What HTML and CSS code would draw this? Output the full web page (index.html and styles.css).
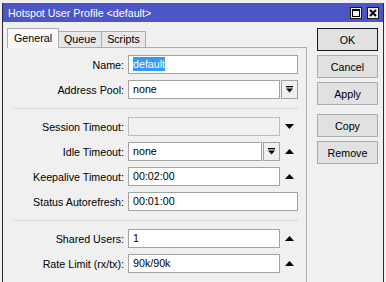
FILE: index.html
```html
<!DOCTYPE html>
<html lang="en">
<head>
    <meta charset="UTF-8">
    <title>Hotspot User Profile &lt;default&gt;</title>
    <link rel="stylesheet" href="styles.css">
</head>
<body>
    <div class="window">
        <div class="titlebar">
            <span class="title">Hotspot User Profile &lt;default&gt;</span>
            <div class="tb-btns">
                <span class="tb-btn">
                    <svg width="10" height="10" viewBox="0 0 10 10"><rect x="1.5" y="1.5" width="7" height="7" fill="none" stroke="#000"/><rect x="1" y="1" width="8" height="2" fill="#000"/></svg>
                </span>
                <span class="tb-btn">
                    <svg width="10" height="10" viewBox="0 0 10 10"><path d="M2 2 L8 8 M8 2 L2 8" stroke="#000" stroke-width="2"/></svg>
                </span>
            </div>
        </div>

        <div class="content">
            <div class="tabs-area">
                <div class="tabs">
                    <span class="tab active">General</span>
                    <span class="tab">Queue</span>
                    <span class="tab">Scripts</span>
                </div>
                <div class="panel">
                    <div class="row">
                        <label>Name:</label>
                        <div class="field"><span class="input full"><span class="sel">default</span></span></div>
                    </div>
                    <div class="row">
                        <label>Address Pool:</label>
                        <div class="field">
                            <span class="input">none</span>
                            <span class="dd"><svg width="7" height="7" viewBox="0 0 7 7"><rect x="0" y="0" width="7" height="1.3" fill="#000"/><path d="M0 2.5 H7 L3.5 6.5 Z" fill="#000"/></svg></span>
                        </div>
                    </div>
                    <div class="sep"></div>
                    <div class="row">
                        <label>Session Timeout:</label>
                        <div class="field">
                            <span class="input disabled"></span>
                            <span class="arrow"><svg width="9" height="5" viewBox="0 0 9 5"><path d="M0 0 H9 L4.5 5 Z" fill="#000"/></svg></span>
                        </div>
                    </div>
                    <div class="row">
                        <label>Idle Timeout:</label>
                        <div class="field">
                            <span class="input">none</span>
                            <span class="dd"><svg width="7" height="7" viewBox="0 0 7 7"><rect x="0" y="0" width="7" height="1.3" fill="#000"/><path d="M0 2.5 H7 L3.5 6.5 Z" fill="#000"/></svg></span>
                            <span class="arrow"><svg width="9" height="5" viewBox="0 0 9 5"><path d="M0 5 H9 L4.5 0 Z" fill="#000"/></svg></span>
                        </div>
                    </div>
                    <div class="row">
                        <label>Keepalive Timeout:</label>
                        <div class="field">
                            <span class="input">00:02:00</span>
                            <span class="arrow"><svg width="9" height="5" viewBox="0 0 9 5"><path d="M0 5 H9 L4.5 0 Z" fill="#000"/></svg></span>
                        </div>
                    </div>
                    <div class="row">
                        <label>Status Autorefresh:</label>
                        <div class="field"><span class="input full">00:01:00</span></div>
                    </div>
                    <div class="sep"></div>
                    <div class="row">
                        <label>Shared Users:</label>
                        <div class="field">
                            <span class="input">1</span>
                            <span class="arrow"><svg width="9" height="5" viewBox="0 0 9 5"><path d="M0 5 H9 L4.5 0 Z" fill="#000"/></svg></span>
                        </div>
                    </div>
                    <div class="row">
                        <label>Rate Limit (rx/tx):</label>
                        <div class="field">
                            <span class="input">90k/90k</span>
                            <span class="arrow"><svg width="9" height="5" viewBox="0 0 9 5"><path d="M0 5 H9 L4.5 0 Z" fill="#000"/></svg></span>
                        </div>
                    </div>
                </div>
            </div>

            <div class="side">
                <button class="btn btn-default">OK</button>
                <button class="btn">Cancel</button>
                <button class="btn">Apply</button>
                <button class="btn gap-top">Copy</button>
                <button class="btn">Remove</button>
            </div>
        </div>
    </div>
</body>
</html>
```

FILE: styles.css
```css
body {
    margin: 0;
    background-color: #f0f0f0;
    font-family: "Liberation Sans", Arial, sans-serif;
    font-size: 10.7px;
    color: #000;
    overflow: hidden;
}
.window {
    margin: 3px 0 0 2px;
    width: 380px;
    height: 279px;
    border-left: 1px solid #2d2d2d;
    border-right: 1px solid #2d2d2d;
    background-color: #f0f0f0;
}
.titlebar {
    height: 19px;
    background-color: #4d56c6;
    color: #fff;
    display: flex;
    align-items: center;
    justify-content: space-between;
    padding: 0 4px 0 5px;
}
.title {
    font-size: 10.7px;
}
.tb-btns {
    display: flex;
    gap: 5px;
}
.tb-btn {
    width: 10px;
    height: 10px;
    border: 1px solid #1a1a1a;
    background-color: #f0f0f0;
    display: flex;
    align-items: center;
    justify-content: center;
}
.content {
    display: flex;
    padding: 6px 0 0 4px;
}
.tabs-area {
    width: 300px;
    display: flex;
    flex-direction: column;
}
.tabs {
    display: flex;
    align-items: flex-end;
    height: 19px;
    position: relative;
    z-index: 1;
}
.tab {
    height: 15px;
    line-height: 15px;
    padding: 0 5px;
    border: 1px solid #adadad;
    border-bottom: none;
    background-color: #e8e8e8;
    margin-left: -1px;
}
.tab:first-child {
    margin-left: 0;
}
.tab.active {
    height: 19px;
    line-height: 18px;
    padding: 0 6px;
    background-color: #f8f8f8;
    margin-bottom: -1px;
    position: relative;
}
.panel {
    border-top: 1px solid #adadad;
    border-right: 1px solid #adadad;
    height: 240px;
    padding: 7px 0 0 1px;
    display: flex;
    flex-direction: column;
    gap: 6px;
}
.row {
    display: flex;
    align-items: center;
    gap: 4px;
    height: 19px;
}
.row label {
    width: 116px;
    text-align: right;
}
.field {
    display: flex;
    width: 170px;
    height: 19px;
}
.input {
    box-sizing: border-box;
    flex: 1;
    height: 19px;
    line-height: 17px;
    border: 1px solid #a3a3a3;
    background-color: #fff;
    padding-left: 4px;
}
.input.disabled {
    background-color: #f0f0f0;
    border-color: #bcbcbc;
}
.sel {
    background-color: #3399ff;
    color: #fff;
    padding: 1px 0;
}
.dd {
    box-sizing: border-box;
    width: 17px;
    height: 19px;
    margin-left: 1px;
    border: 1px solid #a3a3a3;
    background-color: #f0f0f0;
    display: flex;
    align-items: center;
    justify-content: center;
}
.arrow {
    width: 18px;
    height: 19px;
    display: flex;
    align-items: center;
    justify-content: center;
}
.sep {
    height: 1px;
    width: 285px;
    margin: 3px 0 2px 5px;
    background-color: #d7d7d7;
}
.side {
    display: flex;
    flex-direction: column;
    gap: 4px;
    margin-left: 10px;
}
.btn {
    width: 61px;
    height: 23px;
    padding: 0;
    border: 1px solid #adadad;
    background-color: #e1e1e1;
    font-family: "Liberation Sans", Arial, sans-serif;
    font-size: 10.7px;
    color: #000;
}
.btn-default {
    border-color: #1a1a1a;
}
.gap-top {
    margin-top: 5px;
}
```
